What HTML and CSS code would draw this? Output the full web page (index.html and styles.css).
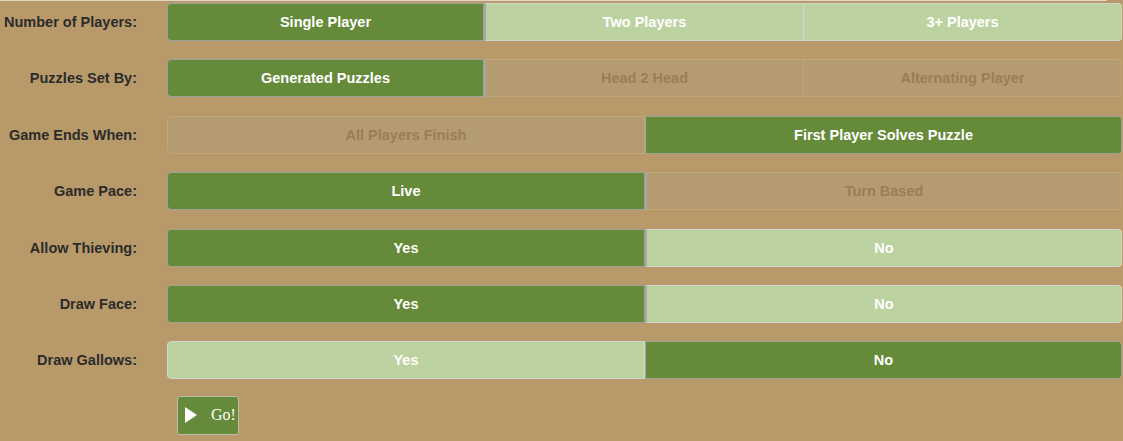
FILE: index.html
```html
<!DOCTYPE html>
<html>
<head>
<meta charset="utf-8">
<link rel="stylesheet" href="styles.css">
</head>
<body>
<div class="topline"></div>
<div class="form">
  <div class="row">
    <div class="label">Number of Players:</div>
    <div class="group g3">
      <div class="btn on">Single Player</div>
      <div class="btn off">Two Players</div>
      <div class="btn off">3+ Players</div>
    </div>
  </div>
  <div class="row">
    <div class="label">Puzzles Set By:</div>
    <div class="group g3">
      <div class="btn on">Generated Puzzles</div>
      <div class="btn dis">Head 2 Head</div>
      <div class="btn dis">Alternating Player</div>
    </div>
  </div>
  <div class="row">
    <div class="label">Game Ends When:</div>
    <div class="group g2">
      <div class="btn dis">All Players Finish</div>
      <div class="btn on">First Player Solves Puzzle</div>
    </div>
  </div>
  <div class="row">
    <div class="label">Game Pace:</div>
    <div class="group g2">
      <div class="btn on">Live</div>
      <div class="btn dis">Turn Based</div>
    </div>
  </div>
  <div class="row">
    <div class="label">Allow Thieving:</div>
    <div class="group g2">
      <div class="btn on">Yes</div>
      <div class="btn off">No</div>
    </div>
  </div>
  <div class="row">
    <div class="label">Draw Face:</div>
    <div class="group g2">
      <div class="btn on">Yes</div>
      <div class="btn off">No</div>
    </div>
  </div>
  <div class="row">
    <div class="label">Draw Gallows:</div>
    <div class="group g2">
      <div class="btn off">Yes</div>
      <div class="btn on">No</div>
    </div>
  </div>
  <div class="gorow">
    <button class="go">
      <svg class="play" width="12" height="16" viewBox="0 0 12 16"><polygon points="0,0 12,8 0,16" fill="#ffffff"/></svg>
      <span class="gotext">Go!</span>
    </button>
  </div>
</div>
</body>
</html>
```

FILE: styles.css
```css
html, body {
  margin: 0;
  padding: 0;
  background: #b89a6a;
  height: 100%;
}
body {
  font-family: "Liberation Sans", Arial, sans-serif;
  font-weight: bold;
  font-size: 14.5px;
}
.topline {
  width: 1107px;
  height: 1px;
  background: #e2d6c2;
}
.form {
  padding-top: 2px;
  display: flex;
  flex-direction: column;
  gap: 18.4px;
}
.row {
  display: flex;
  align-items: center;
  height: 38px;
}
.label {
  width: 137px;
  text-align: right;
  color: #2b2b2b;
  margin-right: 30px;
  flex-shrink: 0;
  white-space: nowrap;
}
.group {
  display: grid;
  width: 955px;
  height: 38px;
}
.g3 { grid-template-columns: 317px 320px 318px; }
.g2 { grid-template-columns: 478px 477px; }
.btn {
  display: flex;
  align-items: center;
  justify-content: center;
  box-sizing: border-box;
  border: 1px solid #b4b4ac;
  color: #ffffff;
}
.btn + .btn { border-left: none; }
.btn:first-child { border-radius: 4px 0 0 4px; }
.btn:last-child { border-radius: 0 4px 4px 0; }
.on {
  background: #658a3a;
  border-color: #9ca39a;
}
.off {
  background: #bdd2a1;
  border-color: #cfd4cc;
}
.dis {
  background: #b59c70;
  border-color: #c0a67b;
  color: #9a7e55;
}
.on + .off, .on + .dis { border-left: 2px solid #a3a9a0; }
.off + .on, .dis + .on { border-left: 1px solid #a3a9a0; }
.gorow {
  padding-left: 177px;
  display: flex;
}
.go {
  width: 62px;
  height: 39px;
  box-sizing: border-box;
  background: #658a3a;
  border: 1px solid #b9bfae;
  border-radius: 3px;
  display: flex;
  align-items: center;
  padding: 0 0 0 7px;
  gap: 14px;
  margin-top: -2px;
}
.play { display: block; }
.gotext {
  font-family: "Liberation Serif", "Times New Roman", serif;
  font-weight: normal;
  font-size: 16px;
  color: #ffffff;
}
```
